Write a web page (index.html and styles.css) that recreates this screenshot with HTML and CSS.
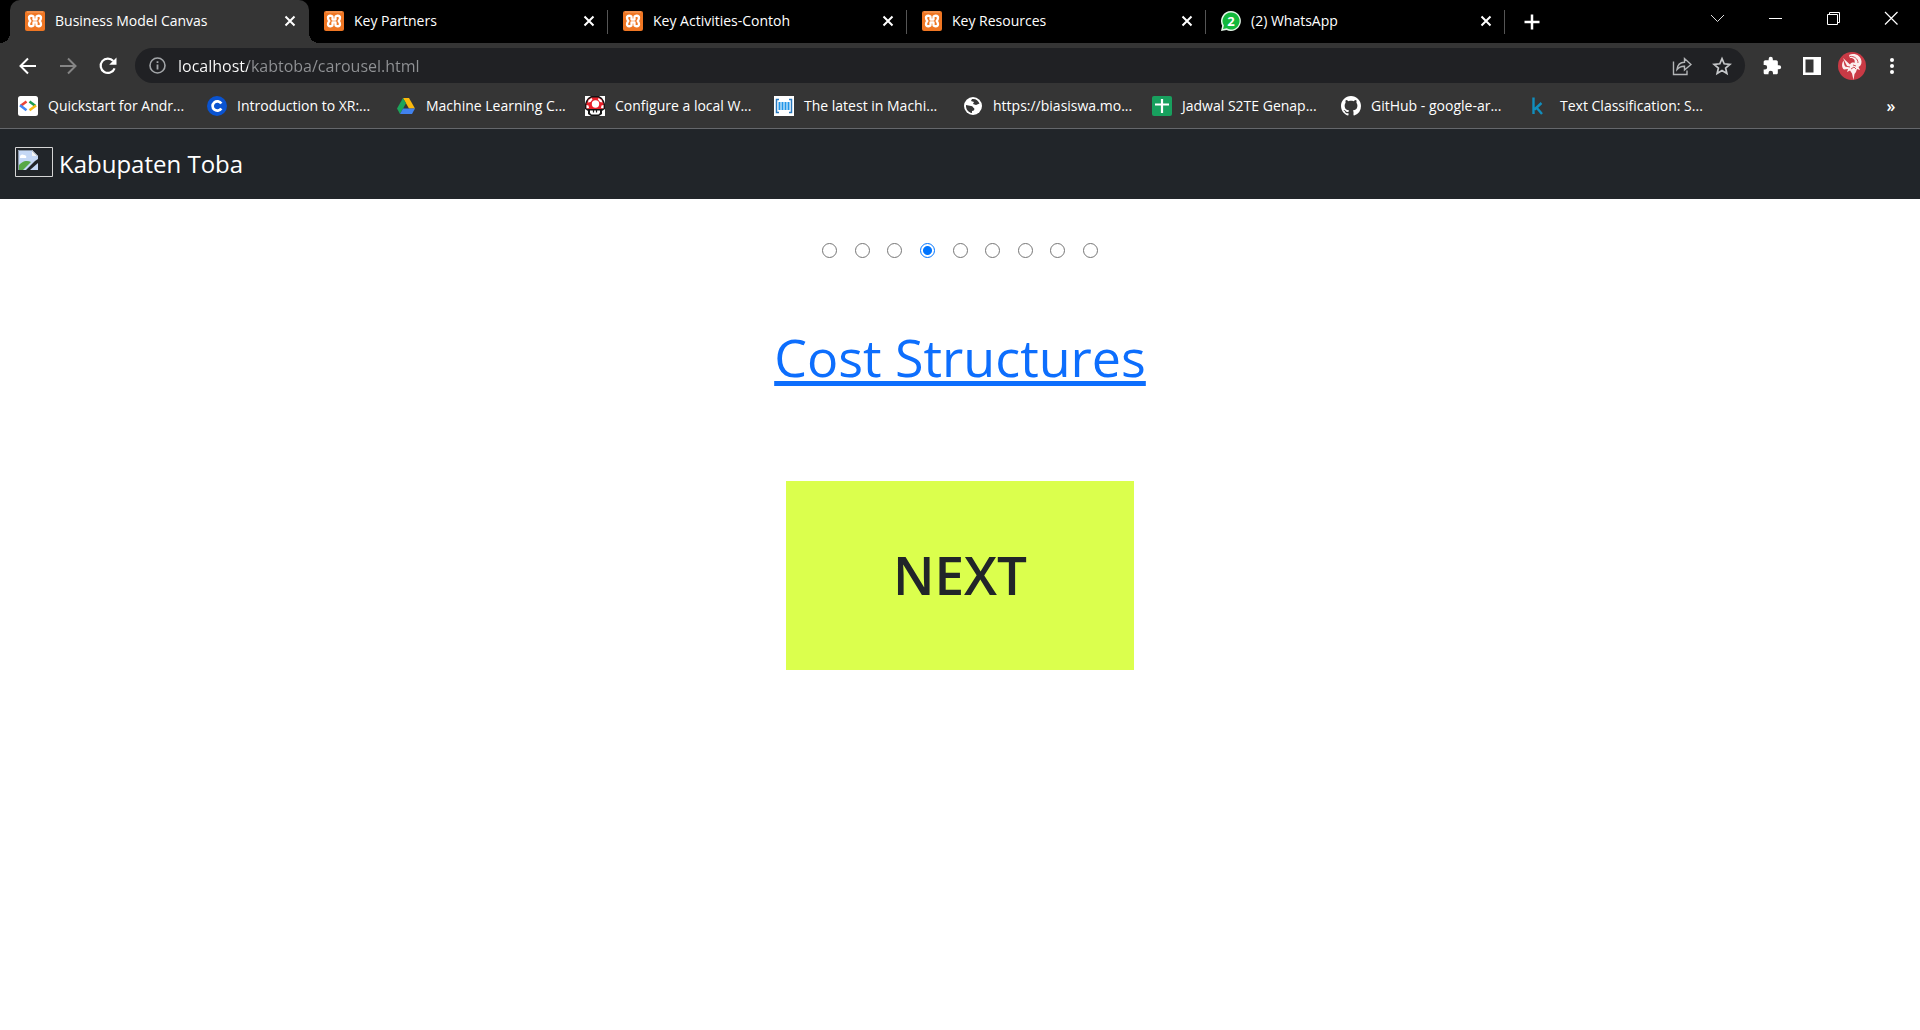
FILE: index.html
```html
<!DOCTYPE html>
<html lang="id">
<head>
<meta charset="utf-8">
<meta name="viewport" content="width=device-width, initial-scale=1">
<title>Business Model Canvas</title>
<link rel="stylesheet" href="styles.css">
</head>
<body>
<svg class="defs" aria-hidden="true">
  <symbol id="xampp" viewBox="0 0 20 20">
    <rect width="20" height="20" rx="2" fill="#ef7623"/>
    <path d="M2 1h16" stroke="#f5a56d" stroke-width="1"/>
    <path d="M8.500 8.600V5.800C8.500 4.500 4 4 4 6.800c0 1.700.6 2.400 1.400 3.200C4.600 10.800 4 11.500 4 13.200c0 2.800 4.500 2.300 4.500 1V11.400h3v2.800c0 1.300 4.500 1.800 4.500-1 0-1.700-.6-2.400-1.400-3.200.8-.8 1.400-1.500 1.400-3.200 0-2.800-4.500-2.300-4.500-1v2.800z" fill="none" stroke="#fff" stroke-width="2.300" stroke-linejoin="round"/>
  </symbol>
  <symbol id="close" viewBox="0 0 20 20">
    <path d="M5.500 5.500l9 9M14.500 5.500l-9 9" stroke="#fff" stroke-width="2" fill="none"/>
  </symbol>
</svg>

<header class="browser">
  <div class="strip">
    <div class="tabs">
      <div class="tab active"><svg class="ico"><use href="#xampp"/></svg><span class="label">Business Model Canvas</span><button class="x" aria-label="Close tab"><svg class="ico"><use href="#close"/></svg></button></div>
      <div class="tab"><svg class="ico"><use href="#xampp"/></svg><span class="label">Key Partners</span><button class="x" aria-label="Close tab"><svg class="ico"><use href="#close"/></svg></button></div>
      <div class="tab"><svg class="ico"><use href="#xampp"/></svg><span class="label">Key Activities-Contoh</span><button class="x" aria-label="Close tab"><svg class="ico"><use href="#close"/></svg></button></div>
      <div class="tab"><svg class="ico"><use href="#xampp"/></svg><span class="label">Key Resources</span><button class="x" aria-label="Close tab"><svg class="ico"><use href="#close"/></svg></button></div>
      <div class="tab"><svg class="ico" viewBox="0 0 20 20"><path d="M10 0a10 10 0 1 1-4.500 19L0 20l1.200-5.200A10 10 0 0 1 10 0z" fill="#e4f6e8"/><path d="M10 1.500a8.500 8.500 0 1 1-4.300 15.800L2 18.100l.9-3.500A8.500 8.500 0 0 1 10 1.500z" fill="#12b83c"/><text x="10" y="14.500" text-anchor="middle" class="badge">2</text></svg><span class="label">(2) WhatsApp</span><button class="x" aria-label="Close tab"><svg class="ico"><use href="#close"/></svg></button></div>
      <button class="new" aria-label="New tab"><svg class="ico" viewBox="0 0 20 20"><path d="M10 2.500v15M2.500 10h15" stroke="#fff" stroke-width="2.500"/></svg></button>
    </div>
    <div class="controls">
      <button aria-label="Search tabs"><svg class="ico" viewBox="0 0 20 20"><path d="M4 7l6.500 6.500L17 7" stroke="#ddd" fill="none"/></svg></button>
      <button aria-label="Minimize"><svg class="ico" viewBox="0 0 20 20"><path d="M4 10.500h13" stroke="#fff"/></svg></button>
      <button aria-label="Restore"><svg class="ico" viewBox="0 0 20 20"><path d="M4.500 6.500h10v10h-10zM6.500 6V4.500h10v10H15" stroke="#fff" fill="none"/></svg></button>
      <button aria-label="Close window"><svg class="ico" viewBox="0 0 20 20"><path d="M4 4l12.500 12.500M16.500 4L4 16.500" stroke="#fff" stroke-width="1.200"/></svg></button>
    </div>
  </div>

  <div class="toolbar">
    <div class="group">
      <button aria-label="Back"><svg class="ico" viewBox="0 0 20 20"><path d="M18 10H3M10 2.500L2.500 10l7.500 7.500" stroke="#fff" stroke-width="2" fill="none"/></svg></button>
      <button aria-label="Forward"><svg class="ico" viewBox="0 0 20 20"><path d="M2 10h15M10 2.500l7.500 7.500-7.500 7.500" stroke="#858585" stroke-width="2" fill="none"/></svg></button>
      <button aria-label="Reload"><svg class="ico" viewBox="0 0 20 20"><path d="M16.600 12.300A7.200 7.200 0 1 1 15.300 5" stroke="#fff" stroke-width="2.200" fill="none"/><path d="M18.500 1.500v7.300h-7.300z" fill="#fff"/></svg></button>
    </div>
    <div class="address">
      <svg class="info" viewBox="0 0 17 17"><circle cx="8.500" cy="8.500" r="7.500" fill="none" stroke="#a2a5a8" stroke-width="1.600"/><path d="M8.500 7.500v5M8.500 4.300v1.800" stroke="#a2a5a8" stroke-width="1.800"/></svg>
      <input class="url" type="text" aria-label="Address" value="localhost/kabtoba/carousel.html">
      <button aria-label="Share"><svg class="ico" viewBox="0 0 20 20"><path d="M1.500 5.500v13h13.500v-4M5 13.500C5.500 9 8 6.500 12.500 6.300V2.500l6.500 6-6.500 5.500v-3.800C9 10 7 11 5 13.500z" fill="none" stroke="#b3b5b7" stroke-width="1.400"/></svg></button>
      <button aria-label="Bookmark"><svg class="ico" viewBox="0 0 20 20"><path d="M10 2.600l2.200 5.200 5.700.5-4.300 3.700 1.300 5.500-4.900-2.900-4.900 2.900 1.300-5.500-4.300-3.700 5.700-.5z" fill="none" stroke="#c5c7c9" stroke-width="1.700"/></svg></button>
    </div>
    <div class="group">
      <button aria-label="Extensions"><svg class="ico" viewBox="0 0 24 24"><path d="M20.500 11H19V7c0-1.100-.9-2-2-2h-4V3.500a2.500 2.500 0 0 0-5 0V5H4c-1.100 0-2 .9-2 2v3.800h1.500a2.700 2.700 0 0 1 0 5.400H2V20c0 1.100.9 2 2 2h3.800v-1.500a2.700 2.700 0 0 1 5.400 0V22H17c1.100 0 2-.9 2-2v-4h1.500a2.500 2.500 0 0 0 0-5z" fill="#fff"/></svg></button>
      <button aria-label="Side panel"><svg class="ico" viewBox="0 0 20 20"><path d="M1 1h18v18H1zM3.500 3.500v13h8v-13z" fill="#fff" fill-rule="evenodd"/></svg></button>
      <button aria-label="Profile"><svg class="avatar" viewBox="0 0 28 28"><circle cx="14" cy="14" r="14" fill="#c93a45"/><path d="M11 3c5-2.500 12 0 12.500 6.500.2 3-1.500 5-3 5.500l1.500 3-3-1-1 3-1.500 2L15.500 28l-1.500-6.500-2-3-3 1.500 1-3-4 .5c-2.500-2-2.500-6-.5-9l1 5 3 1.500L5 6l7 6.500c1-2 3-2.500 4.500-1.500 1-3-1-5.500-4.500-5z" fill="#fbeeee"/><path d="M12 4.500c4-.5 8 2 8 6.500M7 14l5 1M13 17l3-2 2 2M15 13l3 1" stroke="#c93a45" stroke-width=".9" fill="none"/></svg></button>
      <button aria-label="Menu"><svg class="ico" viewBox="0 0 20 20"><circle cx="10" cy="4" r="2" fill="#fff"/><circle cx="10" cy="10" r="2" fill="#fff"/><circle cx="10" cy="16" r="2" fill="#fff"/></svg></button>
    </div>
  </div>

  <nav class="bookmarks" aria-label="Bookmarks">
    <a href="#"><svg class="ico" viewBox="0 0 20 20"><rect width="20" height="20" rx="2.500" fill="#fff"/><g fill="none" stroke-width="2.600"><path d="M8.500 5.500L2.800 9.700" stroke="#ea4335"/><path d="M2 9.300l6.500 4.900" stroke="#4285f4"/><path d="M11.500 5.500l6 4.500" stroke="#1a9d50"/><path d="M18 9.500l-6.500 4.700" stroke="#f5b912"/></g></svg>Quickstart for Andr...</a>
    <a href="#"><svg class="ico" viewBox="0 0 20 20"><circle cx="10" cy="10" r="10" fill="#0a53d0"/><path d="M14.300 7.500a4.700 4.700 0 1 0 0 5" stroke="#fff" stroke-width="2.700" fill="none"/></svg>Introduction to XR:...</a>
    <a href="#"><svg class="ico" viewBox="0 0 20 20"><path d="M7 2h6l6 10.500h-6z" fill="#fbb90c"/><path d="M7 2l3 5.300L4 18l-3-5.500z" fill="#1da45a"/><path d="M7 12.500h12L16 18H4z" fill="#4182ef"/></svg>Machine Learning C...</a>
    <a href="#"><svg class="ico" viewBox="0 0 20 20"><path d="M0 0h20v20H0z" fill="#fff"/><path d="M6 0h8l3 2 2 3 1 3v5l-3 2v3l-3 2H6l-3-2v-3l-3-2V8l1-3 2-3z" fill="#151515"/><path d="M6.500 1.500h7l3 2 2 4v4.500l-2 1H3.500l-2-1V7.500l2-4z" fill="#e8202a"/><circle cx="10.500" cy="8" r="3.700" fill="#fff"/><path d="M3.500 4l3-2 1 1.500-2 2.500-2.500.5zM16.500 4l-3-2-.5 1.500 2 2.500 2.500.5zM1.500 9l2 .5.5 2.500-2.500.5zM18.500 9l-2 .5-.5 2.500 2.500.5z" fill="#fff"/><path d="M4 13.200h12l-1.500 1.300h-9z" fill="#151515"/><path d="M5 14.500h10v2.500l-1.500 1.500h-7L5 17z" fill="#fff"/><path d="M8.500 13.500v3M11.500 13.500v3" stroke="#151515" stroke-width="1.200"/></svg>Configure a local W...</a>
    <a href="#"><svg class="ico" viewBox="0 0 20 20"><path d="M0 0h20v20H0z" fill="#fff"/><path d="M5 3.500H2.500v13H5M15 3.500h2.500v13H15" fill="none" stroke="#2878bd" stroke-width="1.500"/><path d="M5.500 6v8M8.500 6v8M11.500 6v8M14.500 6v8" stroke="#2196e8" stroke-width="2"/></svg>The latest in Machi...</a>
    <a href="#"><svg class="ico" viewBox="0 0 20 20"><circle cx="10" cy="10" r="9" fill="#fff"/><path d="M3 9l5 1c2 0 2 2 3 2 1 1 0 3-2 3v2C5 16.500 2.700 13 3 9zM9 3c4-.5 6 1.500 7.500 4.500L13 9l-3-1 1-2-3-1z" fill="#353535"/></svg>https://biasiswa.mo...</a>
    <a href="#"><svg class="ico" viewBox="0 0 20 20"><rect width="20" height="20" rx="2" fill="#18a05e"/><path d="M10 3v14M3 8.500h14" stroke="#fff" stroke-width="2.200"/></svg>Jadwal S2TE Genap...</a>
    <a href="#"><svg class="ico" viewBox="0 0 16 16"><path fill="#fff" d="M8 0C3.580 0 0 3.580 0 8c0 3.540 2.290 6.530 5.470 7.590.4.070.55-.17.55-.38 0-.19-.01-.82-.01-1.490-2.010.37-2.530-.49-2.690-.94-.09-.23-.48-.94-.82-1.130-.28-.15-.68-.52-.01-.53.63-.01 1.080.58 1.230.82.72 1.210 1.870.87 2.330.66.070-.52.28-.87.51-1.070-1.780-.2-3.640-.89-3.640-3.950 0-.87.31-1.590.82-2.150-.08-.2-.36-1.020.08-2.120 0 0 .67-.21 2.200.82.64-.18 1.320-.27 2-.27s1.360.09 2 .27c1.530-1.040 2.200-.82 2.200-.82.44 1.100.16 1.920.08 2.120.51.56.82 1.270.82 2.150 0 3.070-1.870 3.750-3.650 3.950.29.25.54.73.54 1.480 0 1.070-.01 1.930-.01 2.200 0 .21.15.46.55.38A8.010 8.010 0 0 0 16 8c0-4.420-3.580-8-8-8z"/></svg>GitHub - google-ar...</a>
    <a href="#"><svg class="ico" viewBox="0 0 20 20"><path d="M3.500 1.500V18M11.500 7l-7 6.500M6.500 11.500l5.500 6.500" stroke="#118ebd" stroke-width="2.400" fill="none"/></svg>Text Classification: S...</a>
    <button class="more" aria-label="More bookmarks">»</button>
  </nav>
</header>

<nav class="navbar">
  <a class="brand" href="#">
    <svg class="logo" viewBox="0 0 38 30"><path d="M.500.500h37v29H.500z" fill="none" stroke="#d5d5d5"/><path d="M3 3h14l6 6v14H3z" fill="#c5d8f5"/><path d="M5 10c0-3 3-3 4-2 2 0 3 2 2 3H5z" fill="#fff"/><path d="M3 23v-3c3-6 9-7 13-5l-8 8z" fill="#58a846"/><path d="M23 12v4l-8 7h-4l9-9z" fill="#212529"/><path d="M17 3v6h6z" fill="#f5f5f5"/><path d="M3.500 23V3.500H17l5.500 5.500" fill="none" stroke="#8c98a8"/></svg>
    Kabupaten Toba
  </a>
</nav>

<main class="carousel">
  <div class="dots" role="radiogroup" aria-label="Slides">
    <input type="radio" name="slide" aria-label="Slide 1">
    <input type="radio" name="slide" aria-label="Slide 2">
    <input type="radio" name="slide" aria-label="Slide 3">
    <input type="radio" name="slide" aria-label="Slide 4" checked>
    <input type="radio" name="slide" aria-label="Slide 5">
    <input type="radio" name="slide" aria-label="Slide 6">
    <input type="radio" name="slide" aria-label="Slide 7">
    <input type="radio" name="slide" aria-label="Slide 8">
    <input type="radio" name="slide" aria-label="Slide 9">
  </div>
  <a class="title" href="#">Cost Structures</a>
  <button class="next">NEXT</button>
</main>
</body>
</html>
```
FILE: styles.css
```css
* { box-sizing: border-box; }
body {
  margin: 0;
  background: #fff;
  color: #212529;
  font-family: "Open Sans", "Noto Sans", sans-serif;
}
button {
  display: flex;
  align-items: center;
  justify-content: center;
  padding: 0;
  border: 0;
  background: none;
  color: inherit;
  font: inherit;
  cursor: pointer;
}
a { color: inherit; text-decoration: none; }
.defs { position: absolute; width: 0; height: 0; }
.ico { width: 20px; height: 20px; flex: none; display: block; }

/* Browser frame */
.browser {
  background: #353535;
  border-bottom: 1px solid #65676b;
  color: #fff;
  font-size: 14px;
  line-height: 20px;
}
.strip {
  display: flex;
  justify-content: space-between;
  height: 43px;
  padding-left: 10px;
  background: #000;
}
.tabs { display: flex; flex: 1; min-width: 0; }
.tab {
  position: relative;
  display: flex;
  flex: 0 1 299px;
  align-items: center;
  gap: 10px;
  min-width: 0;
  padding: 0 9px 2px 15px;
}
.tab .label { flex: 1; overflow: hidden; white-space: nowrap; }
.tab:not(.active)::after {
  content: "";
  position: absolute;
  right: 0;
  top: 10px;
  width: 1px;
  height: 24px;
  background: #555;
}
.active { background: #353535; border-radius: 10px 10px 0 0; }
.active::before,
.active::after {
  content: "";
  position: absolute;
  bottom: 0;
  width: 10px;
  height: 10px;
}
.active::before { left: -10px; background: radial-gradient(circle at 0 0, #000 10px, #353535 10px); }
.active::after { right: -10px; background: radial-gradient(circle at 100% 0, #000 10px, #353535 10px); }
.badge { font: bold 13px "Open Sans", sans-serif; fill: #fff; }
.new { width: 54px; }
.controls { display: flex; height: 36px; }
.controls button { width: 58px; }

.toolbar {
  display: flex;
  align-items: center;
  gap: 7px;
  height: 43px;
  padding: 2px 8px 0;
}
.toolbar button { width: 40px; height: 35px; }
.group { display: flex; }
.address {
  display: flex;
  flex: 1;
  align-items: center;
  height: 35px;
  padding: 0 3px 0 14px;
  border-radius: 18px;
  background: #202124;
}
.info { width: 17px; height: 17px; }
.url {
  flex: 1;
  min-width: 0;
  margin-left: 12px;
  padding: 0;
  border: 0;
  outline: 0;
  background: linear-gradient(90deg, #fff 70px, #909295 70px) text;
  color: transparent;
  font: 16px/24px "Open Sans", "Noto Sans", sans-serif;
}
.avatar { width: 28px; height: 28px; }

.bookmarks {
  display: flex;
  align-items: center;
  height: 42px;
  padding: 0 16px 2px 18px;
}
.bookmarks a {
  display: flex;
  flex: 0 1 189px;
  gap: 10px;
  min-width: 0;
  overflow: hidden;
  white-space: nowrap;
}
.more { margin-left: auto; width: 26px; font-size: 16px; font-weight: 600; }

/* Page */
.navbar { padding: 16px 15px; background: #212529; }
.brand {
  display: flex;
  align-items: center;
  gap: 6px;
  color: #fff;
  font-size: 24px;
  line-height: 38px;
}
.logo { width: 38px; height: 30px; margin-bottom: 4px; }
.carousel { display: flex; flex-direction: column; align-items: center; padding: 44px 16px; }
.dots { display: flex; justify-content: space-between; width: 276px; }
.dots input {
  appearance: none;
  width: 15px;
  height: 15px;
  margin: 0;
  border: 1px solid #767676;
  border-radius: 50%;
  background: #fff;
}
.dots input:checked {
  border: 1px solid #0075ff;
  background: radial-gradient(circle, #0075ff 4px, #fff 5px);
}
.title {
  margin-top: 57px;
  color: #0d6efd;
  font-size: 52px;
  line-height: 84px;
  text-decoration: underline;
  text-decoration-thickness: 5px;
  text-underline-offset: 4px;
  text-decoration-skip-ink: none;
}
.next {
  min-width: 348px;
  margin-top: 82px;
  padding: 52px 64px 53px;
  background: #dbff4d;
  font-size: 53px;
  font-weight: 600;
  line-height: 84px;
}
```
